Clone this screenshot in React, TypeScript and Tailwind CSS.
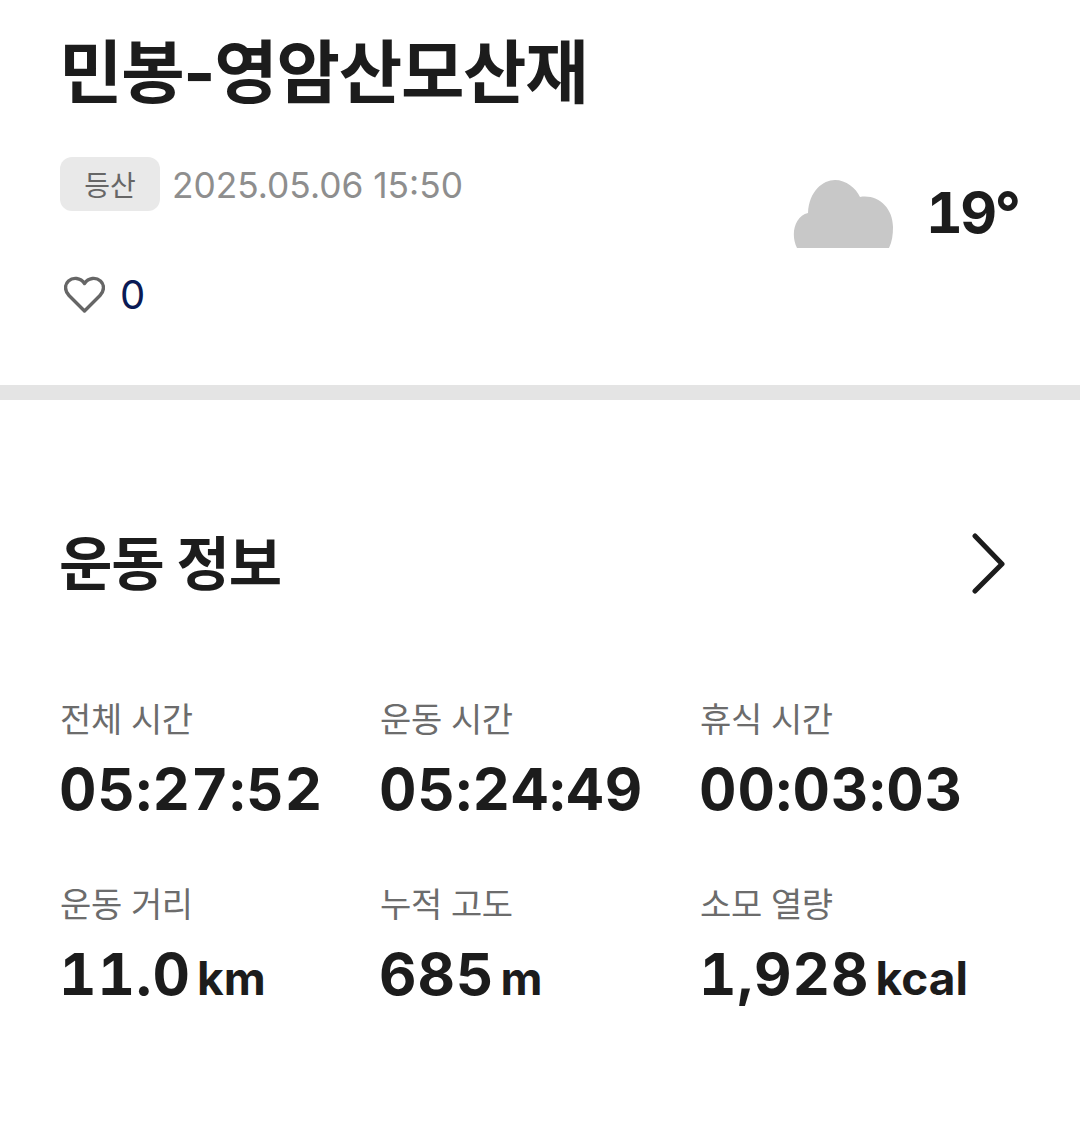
const sans = "font-['Inter','Noto_Sans_CJK_KR',sans-serif]";

const stats = [
  { label: "전체 시간", value: "05:27:52" },
  { label: "운동 시간", value: "05:24:49" },
  { label: "휴식 시간", value: "00:03:03" },
  { label: "운동 거리", value: "11.0", unit: "km" },
  { label: "누적 고도", value: "685", unit: "m" },
  { label: "소모 열량", value: "1,928", unit: "kcal" },
];

export default function App() {
  return (
    <div className={`w-[1080px] h-[1133px] overflow-hidden bg-white text-[#1c1c1c] ${sans}`}>
      {/* Header */}
      <section className="h-[385px] px-[60px] pt-[31px] relative">
        <h1 className="text-[69px] leading-[84px] font-bold tracking-[-1.3px] -ml-[1px]">민봉-영암산모산재</h1>
        <div className="mt-[42px] flex items-center gap-[13px]">
          <span className="w-[100px] h-[54px] pt-[3px] rounded-[12px] bg-[#e9e9e9] flex items-center justify-center text-[28px] text-[#666666]">
            등산
          </span>
          <span className="pt-[4px] text-[35.3px] leading-[48px] text-[#8e8e8e] -ml-[1px]">2025.05.06 15:50</span>
        </div>
        <div className="mt-[62px] flex items-center gap-[16px] pl-[4px]">
          <svg width="41" height="38" viewBox="0 0 41 38" fill="none" stroke="#666666" strokeWidth="3.4" strokeLinejoin="round">
            <path d="M20.500 35 5 19.500C.5 15 .5 8.500 4.500 5 9 1 16.500 1.500 20.500 7.500 24.500 1.500 32 1 36.500 5 40.500 8.500 40.500 15 36 19.500Z" />
          </svg>
          <span className="text-[40px] leading-[44px] text-[#0a1a55] -ml-[1px]">0</span>
        </div>
        <div className="absolute left-[793px] top-[178px] flex items-center gap-[33px]">
          <svg width="100" height="69" viewBox="0 0 100 69" fill="#c8c8c8">
            <path d="M4 69C-3 55 2 37 15 34 16 12 30 1 42 1c11 0 21 8 25 17 18-3 33 11 33 30 0 8-1 15-4 21Z" />
          </svg>
          <span className="text-[57px] leading-[70px] font-bold tabular-nums tracking-[-2.5px]">19°</span>
        </div>
      </section>

      <div className="h-[15px] bg-[#e4e4e4]" />

      {/* 운동 정보 */}
      <section className="px-[60px]">
        <div className="mt-[126px] h-[76px] flex items-center justify-between">
          <h2 className="text-[58px] font-bold tracking-[-1px] -ml-[1px]">운동 정보</h2>
          <svg width="34" height="62" viewBox="0 0 34 62" fill="none" stroke="#1c1c1c" strokeWidth="5" strokeLinecap="round" strokeLinejoin="round" className="mr-[14px]">
            <path d="M3 3 30 31 3 58" />
          </svg>
        </div>
        <div className="mt-[96px] grid grid-cols-[320px_320px_320px] gap-y-[59px]">
          {stats.map((s) => (
            <div key={s.label}>
              <div className="text-[34px] leading-[44px] text-[#6c6c6c] tracking-[-0.4px]">{s.label}</div>
              <div className="h-[70px] mt-[12px] flex items-baseline">
                <span className="text-[58px] leading-[70px] font-bold tabular-nums tracking-[1px] -ml-[1px]">{s.value}</span>
                {s.unit && <span className="ml-[6px] text-[46px] font-bold">{s.unit}</span>}
              </div>
            </div>
          ))}
        </div>
      </section>
    </div>
  );
}
